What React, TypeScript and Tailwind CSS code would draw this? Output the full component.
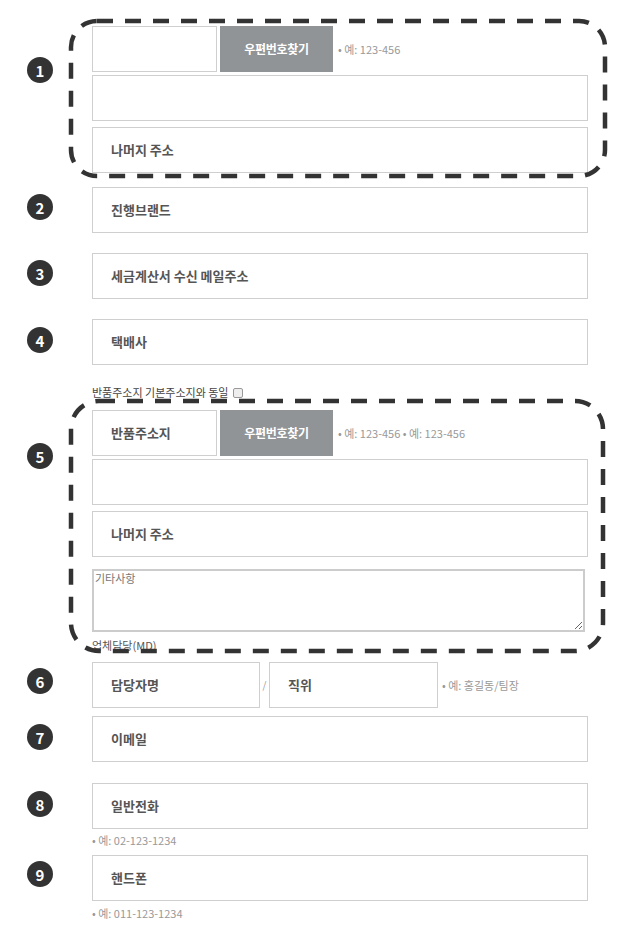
import React from 'react'

const font = "font-['Noto_Sans_CJK_KR','Noto_Sans',sans-serif]"

function Num({ n, top }: { n: number; top: string }) {
  return (
    <div className="w-[92px] shrink-0 pl-[27px]">
      <div
        className={`${top} flex h-[26px] w-[26px] items-center justify-center rounded-full bg-[#333] text-[15px] font-bold leading-none text-white`}
      >
        {n}
      </div>
    </div>
  )
}

function Field({ label, className = 'w-[496px]' }: { label?: string; className?: string }) {
  return (
    <div
      className={`${className} flex h-[46px] items-center border border-[#cfcfcf] bg-white px-[18px] text-[13px] font-bold text-[#555]`}
    >
      {label}
    </div>
  )
}

function Hint({ children, className = '' }: { children: React.ReactNode; className?: string }) {
  return <span className={`text-[11px] leading-[12px] text-[#999] ${className}`}>{children}</span>
}

function ZipRow({ label, hint }: { label?: string; hint: string }) {
  return (
    <div className="flex h-[46px] items-center">
      <Field label={label} className="w-[125px]" />
      <button className="ml-[3px] h-[46px] w-[113px] bg-[#909497] text-[12px] font-bold tracking-[-0.3px] text-white">
        우편번호찾기
      </button>
      <Hint className="ml-[5px]">{hint}</Hint>
    </div>
  )
}

export default function App() {
  return (
    <div className={`relative min-h-[928px] w-[628px] bg-white pt-[26px] ${font}`}>
      {/* 1 */}
      <div className="flex">
        <Num n={1} top="mt-[31px]" />
        <div className="flex flex-col">
          <ZipRow hint="• 예: 123-456" />
          <div className="mt-[3px]">
            <Field />
          </div>
          <div className="mt-[6px]">
            <Field label="나머지 주소" />
          </div>
        </div>
      </div>

      {/* 2 */}
      <div className="mt-[14px] flex">
        <Num n={2} top="mt-[7px]" />
        <Field label="진행브랜드" />
      </div>

      {/* 3 */}
      <div className="mt-[20px] flex">
        <Num n={3} top="mt-[7px]" />
        <Field label="세금계산서 수신 메일주소" />
      </div>

      {/* 4 */}
      <div className="mt-[20px] flex">
        <Num n={4} top="mt-[8px]" />
        <Field label="택배사" />
      </div>

      <div className="mt-[20px] flex h-[15px] items-center pl-[92px] text-[11px] text-[#444]">
        반품주소지 기본주소지와 동일
        <input
          type="checkbox"
          className="ml-[4px] h-[10px] w-[10px] appearance-none rounded-[2px] border border-[#999] bg-[#eee]"
        />
      </div>

      {/* 5 */}
      <div className="mt-[10px] flex">
        <Num n={5} top="mt-[33px]" />
        <div className="flex flex-col">
          <ZipRow label="반품주소지" hint="• 예: 123-456 • 예: 123-456" />
          <div className="mt-[3px]">
            <Field />
          </div>
          <div className="mt-[6px]">
            <Field label="나머지 주소" />
          </div>
          <textarea
            readOnly
            placeholder="기타사항"
            className="mt-[12px] h-[63px] w-[493px] border-2 border-[#ccc] px-[1px] py-0 text-[11px] leading-[14px] text-[#555] placeholder:text-[#777]"
          />
          <div className="mt-[7px] text-[11px] leading-[12px] text-[#555]">업체담당(MD)</div>
        </div>
      </div>

      {/* 6 */}
      <div className="mt-[11px] flex">
        <Num n={6} top="mt-[6px]" />
        <div className="flex h-[45px] items-center">
          <Field label="담당자명" className="h-[45px] w-[168px]" />
          <span className="w-[9px] text-center text-[10px] text-[#999]">/</span>
          <Field label="직위" className="h-[45px] w-[169px]" />
          <Hint className="ml-[4px]">• 예: 홍길동/팀장</Hint>
        </div>
      </div>

      {/* 7 */}
      <div className="mt-[9px] flex">
        <Num n={7} top="mt-[8px]" />
        <Field label="이메일" />
      </div>

      {/* 8 */}
      <div className="mt-[21px] flex">
        <Num n={8} top="mt-[8px]" />
        <div className="flex flex-col">
          <Field label="일반전화" />
          <Hint className="mt-[5px]">• 예: 02-123-1234</Hint>
        </div>
      </div>

      {/* 9 */}
      <div className="mt-[9px] flex">
        <Num n={9} top="mt-[6px]" />
        <div className="flex flex-col">
          <Field label="핸드폰" />
          <Hint className="mt-[6px]">• 예: 011-123-1234</Hint>
        </div>
      </div>

      <svg
        className="pointer-events-none absolute left-0 top-0"
        width="628"
        height="928"
        fill="none"
        stroke="#333"
        strokeWidth="4.5"
        strokeDasharray="16 12"
      >
        <rect x="71" y="21" width="534" height="155" rx="26" />
        <rect x="71" y="401" width="532" height="250" rx="28" />
      </svg>
    </div>
  )
}
